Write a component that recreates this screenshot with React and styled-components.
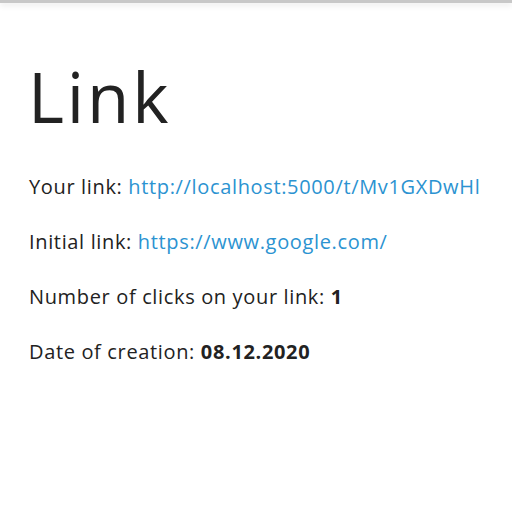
import React from "react";
import styled, { createGlobalStyle } from "styled-components";

const Global = createGlobalStyle`
  html, body { margin: 0; padding: 0; background: #fff; }
  body { font-family: "Open Sans", "Noto Sans", sans-serif; color: #222; }
`;

const TopBar = styled.div`
  height: 3px;
  background: #c8c8c8;
  box-shadow: 0 2px 6px rgba(0, 0, 0, 0.12);
`;

const Page = styled.main`
  padding: 0 29px;
`;

const Title = styled.h1`
  margin: 31px 0 0 -1px;
  font-size: 69px;
  letter-spacing: 2.8px;
  font-weight: 400;
  line-height: 125px;
  color: #222;
`;

const Row = styled.p`
  margin: 0;
  font-size: 20px;
  letter-spacing: 0.65px;
  line-height: 55px;
  white-space: nowrap;
`;

const A = styled.a`
  color: #2b93d1;
  text-decoration: none;
`;

const B = styled.b`
  font-weight: 700;
`;

export default function App() {
  return (
    <>
      <Global />
      <TopBar />
      <Page>
        <Title>Link</Title>
        <Row>Your link: <A href="#">http://localhost:5000/t/Mv1GXDwHl</A></Row>
        <Row>Initial link: <A href="#">https://www.google.com/</A></Row>
        <Row>Number of clicks on your link: <B>1</B></Row>
        <Row>Date of creation: <B>08.12.2020</B></Row>
      </Page>
    </>
  );
}
